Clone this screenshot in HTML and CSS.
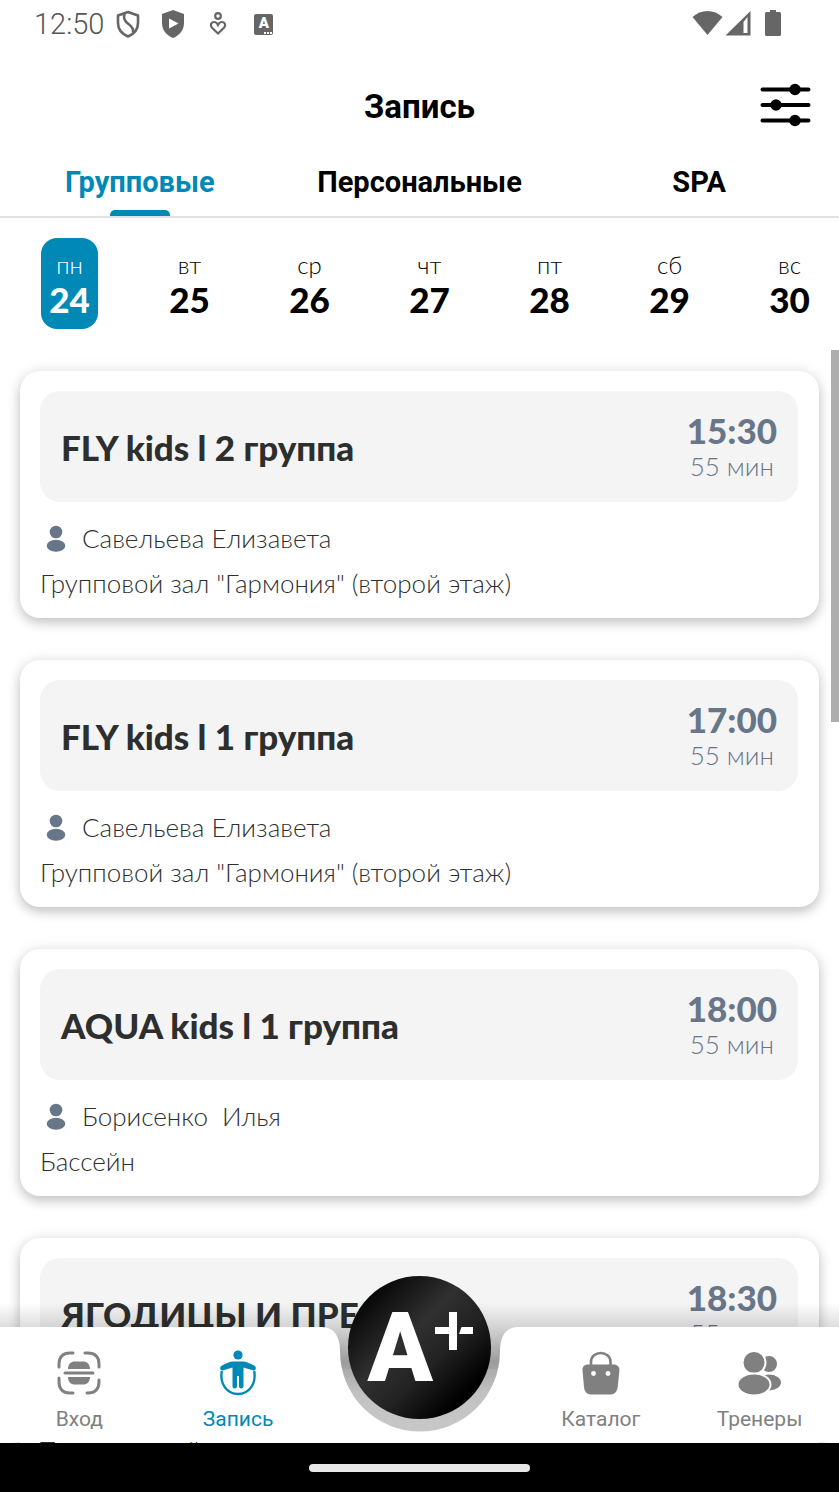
FILE: index.html
```html
<!DOCTYPE html>
<html lang="ru">
<head>
<meta charset="utf-8">
<meta name="viewport" content="width=device-width, initial-scale=1">
<title>Запись</title>
<link rel="stylesheet" href="styles.css">
</head>
<body>
<svg class="defs" aria-hidden="true">
  <symbol id="person" viewBox="0 0 20 28">
    <circle cx="10" cy="7" r="6.3"/>
    <ellipse cx="10" cy="20.700" rx="9.300" ry="6"/>
  </symbol>
</svg>
<div class="app">
  <div class="status">
    <span class="clock">12:50</span>
    <svg class="st-shield" viewBox="0 0 24 28" fill="none" stroke="#666" stroke-width="2.600" stroke-linejoin="round"><path d="M12 2 L22 5.500 V13 C22 19 18 24 12 26.500 C6 24 2 19 2 13 V5.500Z"/><path d="M8.500 3.500 C7 9 9 11.500 12.500 14 C16.500 17 18 19 17 22.500"/></svg>
    <svg class="st-play" viewBox="0 0 24 28"><path fill="#666" d="M12 0 L23 4 V13 C23 20 18.500 25.500 12 28 C5.500 25.500 1 20 1 13 V4Z"/><path fill="#fff" d="M8 8.500 L17.500 13.500 L8 18.500Z"/></svg>
    <svg class="st-heart" viewBox="0 0 16 22" fill="none" stroke="#666" stroke-width="2.200"><circle cx="8" cy="3" r="2.800"/><path d="M8 20.500 L2 14.700 C-0.500 12 1.500 9 4.200 9 C6.300 9 7.300 10.500 8 12 C8.700 10.500 9.700 9 11.800 9 C14.500 9 16.500 12 14 14.700Z"/></svg>
    <span class="st-a">A<i></i></span>
    <svg class="st-net" viewBox="0 0 90 28" fill="#666"><path d="M0.500 7 C9 -1 22 -1 30.500 7 L15.500 25Z"/><path fill-rule="evenodd" d="M58.500 1 V25.500 H33.500Z M55.500 7 L51.500 12 V23 H55.500Z"/><path d="M78 0 h6 v2 h3.500 a1.500 1.500 0 0 1 1.500 1.500 v21 a1.500 1.500 0 0 1 -1.500 1.500 h-13 a1.500 1.500 0 0 1 -1.500 -1.500 v-21 a1.500 1.500 0 0 1 1.500 -1.500 h3.500z"/></svg>
  </div>

  <header class="header">
    <h1>Запись</h1>
    <button class="filter" type="button" aria-label="Фильтр">
      <svg viewBox="0 0 50 44" stroke="#000" stroke-width="4" stroke-linecap="round"><path d="M1.500 5.500H47.500M1.500 21H47.500M1.500 36.500H47.500"/><g stroke="none"><circle cx="34" cy="5.500" r="5.700"/><circle cx="15" cy="21" r="5.700"/><circle cx="34" cy="36.500" r="5.700"/></g></svg>
    </button>
  </header>

  <nav class="tabs">
    <a class="tab active" href="#group">Групповые</a>
    <a class="tab" href="#personal">Персональные</a>
    <a class="tab" href="#spa">SPA</a>
  </nav>

  <div class="days">
    <button type="button" class="day active"><span>пн</span><b>24</b></button>
    <button type="button" class="day"><span>вт</span><b>25</b></button>
    <button type="button" class="day"><span>ср</span><b>26</b></button>
    <button type="button" class="day"><span>чт</span><b>27</b></button>
    <button type="button" class="day"><span>пт</span><b>28</b></button>
    <button type="button" class="day"><span>сб</span><b>29</b></button>
    <button type="button" class="day"><span>вс</span><b>30</b></button>
  </div>

  <div class="content">
    <main class="list">
      <article class="card">
        <div class="head"><h2>FLY kids l 2 группа</h2><div class="when"><time>15:30</time><span>55 мин</span></div></div>
        <p class="coach"><svg><use href="#person"/></svg>Савельева Елизавета</p>
        <p class="place">Групповой зал "Гармония" (второй этаж)</p>
      </article>
      <article class="card">
        <div class="head"><h2>FLY kids l 1 группа</h2><div class="when"><time>17:00</time><span>55 мин</span></div></div>
        <p class="coach"><svg><use href="#person"/></svg>Савельева Елизавета</p>
        <p class="place">Групповой зал "Гармония" (второй этаж)</p>
      </article>
      <article class="card">
        <div class="head"><h2>AQUA kids l 1 группа</h2><div class="when"><time>18:00</time><span>55 мин</span></div></div>
        <p class="coach"><svg><use href="#person"/></svg>Борисенко&nbsp; Илья</p>
        <p class="place">Бассейн</p>
      </article>
      <article class="card">
        <div class="head"><h2>ЯГОДИЦЫ И ПРЕСС</h2><div class="when"><time>18:30</time><span>55 мин</span></div></div>
        <p class="coach"></p>
        <p class="place">Тренажерный зал</p>
      </article>
    </main>
    <div class="thumb"></div>

    <nav class="bottom">
      <div class="shade"></div>
      <a class="item" href="#entry">
        <svg viewBox="0 0 44 44" fill="none" stroke="#808080" stroke-width="3" stroke-linecap="round"><path d="M2 16 V13 C2 6 6 2 13 2 H16 M28 2 H31 C38 2 42 6 42 13 V16 M42 29 V31 C42 38 38 42 31 42 H30 M16 42 H13 C6 42 2 38 2 31 V27"/><path d="M8 22 H36"/><path stroke="none" fill="#808080" d="M11 18 C11 13 14 10.500 18 10.500 H26 C30 10.500 33 13 33 18Z M11 26 H33 C33 31 30 33.500 26 33.500 H18 C14 33.500 11 31 11 26Z"/></svg>
        <span>Вход</span>
      </a>
      <a class="item active" href="#booking">
        <svg viewBox="0 0 44 44" fill="#0089b6"><circle cx="22" cy="4" r="4.600"/><path d="M17 10.500 H27 C30 10.500 34 12.500 38 14.500 C41.500 16.500 39.500 20.500 36.500 19.300 L27.500 16.500 V35.500 C27.500 38 23 38 23 35.500 V25 H21 V35.500 C21 38 16.500 38 16.500 35.500 V16.500 L7.500 19.300 C4.500 20.500 2.500 16.500 6 14.500 C10 12.500 14 10.500 17 10.500Z"/><path fill="none" stroke="#0089b6" stroke-width="2.400" d="M5.800 20 C3.500 33 11 43 22 43 C33 43 40.500 33 38.200 20"/></svg>
        <span>Запись</span>
      </a>
      <div class="notch">
        <svg class="cut" viewBox="0 0 204 115"><path fill="#fff" d="M0 0 H4 C16 0 22 9 22 24.500 A80 80 0 0 0 182 24.500 C182 9 188 0 200 0 H204 V115 H0Z"/></svg>
        <button class="logo" type="button"><span>A</span><svg viewBox="0 0 38 38" aria-hidden="true"><path fill="#fff" d="M14 0 H22 V38 H14 V22 H0 V15 H14Z M26.500 15 H38 V22 H24Z"/></svg></button>
      </div>
      <a class="item" href="#catalog">
        <svg viewBox="0 0 44 44"><path fill="none" stroke="#808080" stroke-width="2.600" d="M12 14 V11 C12 -1 31.500 -1 31.500 11 V14"/><path fill="#808080" d="M9 13.500 H34.500 C38.500 13.500 40.700 16 40.400 19.500 L38.700 36 C38 41 35.500 43.500 30.500 43.500 H13 C8 43.500 5.500 41 5 36 L3.500 19.500 C3.200 16 5 13.500 9 13.500Z"/><circle cx="14.500" cy="22.500" r="2.400" fill="#fff"/><circle cx="29" cy="22.500" r="2.400" fill="#fff"/></svg>
        <span>Каталог</span>
      </a>
      <a class="item" href="#coaches">
        <svg viewBox="0 0 44 44" fill="#808080" stroke="#fff" stroke-width="2"><circle cx="31" cy="13" r="9"/><ellipse cx="31" cy="31.500" rx="13" ry="9"/><circle cx="16" cy="11.500" r="11.500"/><ellipse cx="16" cy="33.500" rx="16.500" ry="11"/></svg>
        <span>Тренеры</span>
      </a>
    </nav>
  </div>
  <div class="system"><i></i></div>
</div>
</body>
</html>
```
FILE: styles.css
```css
* { box-sizing: border-box; }
body { margin: 0; background: #fff; color: #000; font-family: Roboto, "Liberation Sans", sans-serif; }
h1, h2, p { margin: 0; }
a { color: inherit; text-decoration: none; }
button { font: inherit; color: inherit; background: none; border: 0; padding: 0; cursor: pointer; }
svg { display: block; overflow: visible; }
.defs { position: absolute; width: 0; height: 0; }

.app { height: 100vh; display: flex; flex-direction: column; overflow: hidden; }

.status { display: flex; align-items: center; height: 48px; padding: 0 57px 0 34px; color: #666; }
.clock { font-size: 29px; font-weight: 300; line-height: 48px; margin-right: 12px; color: #555; }
.st-shield { width: 24px; height: 28px; margin-right: 21px; }
.st-play { width: 24px; height: 28px; margin-right: 25px; }
.st-heart { width: 16px; height: 22px; margin-right: 28px; }
.st-a { position: relative; width: 19px; height: 21px; border-radius: 2px; background: #666; color: #fff; font-size: 15px; font-weight: 900; line-height: 19px; text-align: center; }
.st-a i { position: absolute; right: 1px; bottom: 1px; width: 8px; border-bottom: 2px dotted #fff; }
.st-net { width: 90px; height: 28px; margin-left: auto; }

.header { display: grid; grid-template-columns: 50px 1fr 50px; align-items: center; height: 98px; padding: 18px 28px 0; }
.header h1 { grid-column: 2; font-size: 33px; font-weight: 700; line-height: 40px; padding-top: 2px; text-align: center; }
.filter svg { width: 50px; height: 44px; }

.tabs { display: grid; grid-template-columns: repeat(3, 1fr); border-bottom: 2px solid #e2e2e2; }
.tab { position: relative; height: 70px; line-height: 72px; font-size: 29px; font-weight: 700; text-align: center; }
.tab.active { color: #0089b6; }
.tab.active::after { content: ""; position: absolute; left: 50%; bottom: 0; width: 60px; height: 6px; margin-left: -30px; border-radius: 5px 5px 0 0; background: #0089b6; }

.days { display: flex; justify-content: space-between; padding: 20px 21px 21px 41px; font-family: Lato, "Open Sans", sans-serif; }
.day { display: flex; flex-direction: column; align-items: center; width: 57px; height: 91px; padding-top: 12px; border-radius: 16px; }
.day span { font-size: 24px; font-weight: 300; line-height: 30px; }
.day b { font-size: 35px; font-weight: 900; line-height: 38px; }
.day.active { background: #0089b6; color: #fff; }

.content { position: relative; flex: 1; min-height: 0; overflow: hidden; font-family: Lato, "Open Sans", sans-serif; }
.list { display: flex; flex-direction: column; gap: 42px; padding: 21px 20px; }
.card { padding: 20px 21px 12px 20px; border-radius: 20px; background: #fff; color: #2d2f2f; box-shadow: 0 5px 12px rgba(0,0,0,.2), 0 0 16px rgba(0,0,0,.08); }
.head { display: flex; align-items: center; justify-content: space-between; height: 111px; padding: 0 21px; border-radius: 20px; background: #f4f4f4; }
.head h2 { font-size: 35px; font-weight: 900; line-height: 42px; }
.when { display: flex; flex-direction: column; align-items: center; color: #68768a; }
.when time { font-size: 35px; font-weight: 900; line-height: 38px; }
.when span { font-size: 26px; font-weight: 300; line-height: 34px; }
.coach { display: flex; align-items: center; gap: 16px; min-height: 59px; padding: 14px 0 0 6px; font-size: 26px; font-weight: 300; line-height: 45px; }
.coach svg { width: 20px; height: 28px; fill: #68768a; }
.place { font-size: 26px; font-weight: 300; line-height: 45px; white-space: nowrap; }
.thumb { position: absolute; top: 0; right: 0; width: 8px; height: 34%; background: #adadad; }

.bottom { position: absolute; left: 0; right: 0; bottom: 1px; display: grid; grid-template-columns: 1fr 1fr 204px 1fr 1fr; height: 115px; font-family: Roboto, "Liberation Sans", sans-serif; }
.shade { position: absolute; left: 0; right: 0; top: -24px; height: 130px; background: linear-gradient(rgba(0,0,0,0), rgba(0,0,0,.13) 18%, rgba(0,0,0,.36) 45%, rgba(0,0,0,.24) 70%, rgba(0,0,0,.22)); }
.item { position: relative; display: flex; flex-direction: column; align-items: center; padding-top: 24px; background: #fff; color: #808080; font-size: 21px; line-height: 28px; }
.item svg { width: 44px; height: 44px; margin-bottom: 10px; }
.item.active { color: #0089b6; }
.notch { position: relative; }
.cut { width: 204px; height: 115px; }
.logo { position: absolute; left: 30px; top: -51px; width: 143px; height: 143px; border-radius: 50%; background: linear-gradient(135deg, #000 10%, #303030 42%, #222 60%, #000 82%); color: #fff; }
.logo span { position: absolute; left: 20px; top: 16px; font-size: 96px; font-weight: 900; line-height: 112px; }
.logo svg { position: absolute; left: 87px; top: 36px; width: 38px; height: 38px; }

.system { display: flex; align-items: center; justify-content: center; height: 49px; background: #000; }
.system i { width: 221px; height: 8px; border-radius: 4px; background: #e8e8e8; }
```
